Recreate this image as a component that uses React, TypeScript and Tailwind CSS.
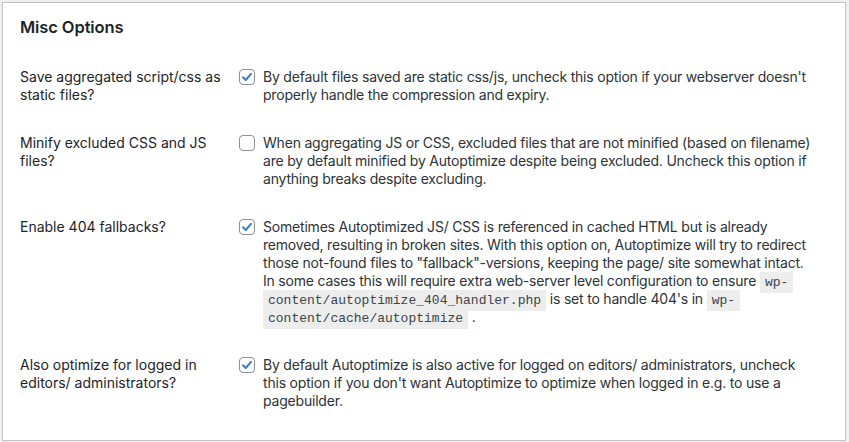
import React from "react";

const font = { fontFamily: 'Inter, "Liberation Sans", sans-serif' };

function Check({ checked }: { checked: boolean }) {
  return (
    <span className="mt-px flex h-4 w-4 shrink-0 items-center justify-center rounded-[4px] border border-[#8c8f94] bg-white">
      {checked && (
        <svg width="14" height="14" viewBox="0 0 14 14">
          <path d="M3 7.2 L5.8 10 L11 3.8" fill="none" stroke="#3582c4" strokeWidth="2" strokeLinecap="round" strokeLinejoin="round" />
        </svg>
      )}
    </span>
  );
}

function Code({ children }: { children: React.ReactNode }) {
  return (
    <code className="bg-[#ededed] px-[5px] py-[3px] font-['Liberation_Mono',monospace] text-[13px] leading-[12px] tracking-normal text-[#3c434a] [box-decoration-break:clone]">
      {children}
    </code>
  );
}

function Row({ label, checked, children }: { label: React.ReactNode; checked: boolean; children: React.ReactNode }) {
  return (
    <div className="flex py-[15px]">
      <div className="w-[219px] shrink-0 whitespace-nowrap text-[14px] leading-[18px] text-[#1d2327]">{label}</div>
      <div className="flex items-start gap-2">
        <Check checked={checked} />
        <div className="whitespace-nowrap text-[14px] leading-[18px] tracking-[-0.2px] text-[#2c3338]">{children}</div>
      </div>
    </div>
  );
}

export default function App() {
  return (
    <div className="min-h-[442px] w-[849px] bg-[#f0f0f1] pl-[2px] pt-[2px]" style={font}>
      <div className="h-[439px] w-[844px] border border-[#c3c4c7] bg-white pl-[17px]">
        <h2 className="mt-[12px] mb-[14px] text-[16.5px] font-semibold leading-[24px] tracking-[-0.1px] text-[#1d2327]">Misc Options</h2>
        <Row label={<>Save aggregated script/css as<br />static files?</>} checked>
          By default files saved are static css/js, uncheck this option if your webserver doesn't<br />
          properly handle the compression and expiry.
        </Row>
        <Row label={<>Minify excluded CSS and JS<br />files?</>} checked={false}>
          When aggregating JS or CSS, excluded files that are not minified (based on filename)<br />
          are by default minified by Autoptimize despite being excluded. Uncheck this option if<br />
          anything breaks despite excluding.
        </Row>
        <Row label="Enable 404 fallbacks?" checked>
          Sometimes Autoptimized JS/ CSS is referenced in cached HTML but is already<br />
          removed, resulting in broken sites. With this option on, Autoptimize will try to redirect<br />
          those not-found files to "fallback"-versions, keeping the page/ site somewhat intact.<br />
          In some cases this will require extra web-server level configuration to ensure <Code>wp-</Code><br />
          <Code>content/autoptimize_404_handler.php</Code> is set to handle 404's in <Code>wp-</Code><br />
          <Code>content/cache/autoptimize</Code> .
        </Row>
        <Row label={<>Also optimize for logged in<br />editors/ administrators?</>} checked>
          By default Autoptimize is also active for logged on editors/ administrators, uncheck<br />
          this option if you don't want Autoptimize to optimize when logged in e.g. to use a<br />
          pagebuilder.
        </Row>
      </div>
    </div>
  );
}
